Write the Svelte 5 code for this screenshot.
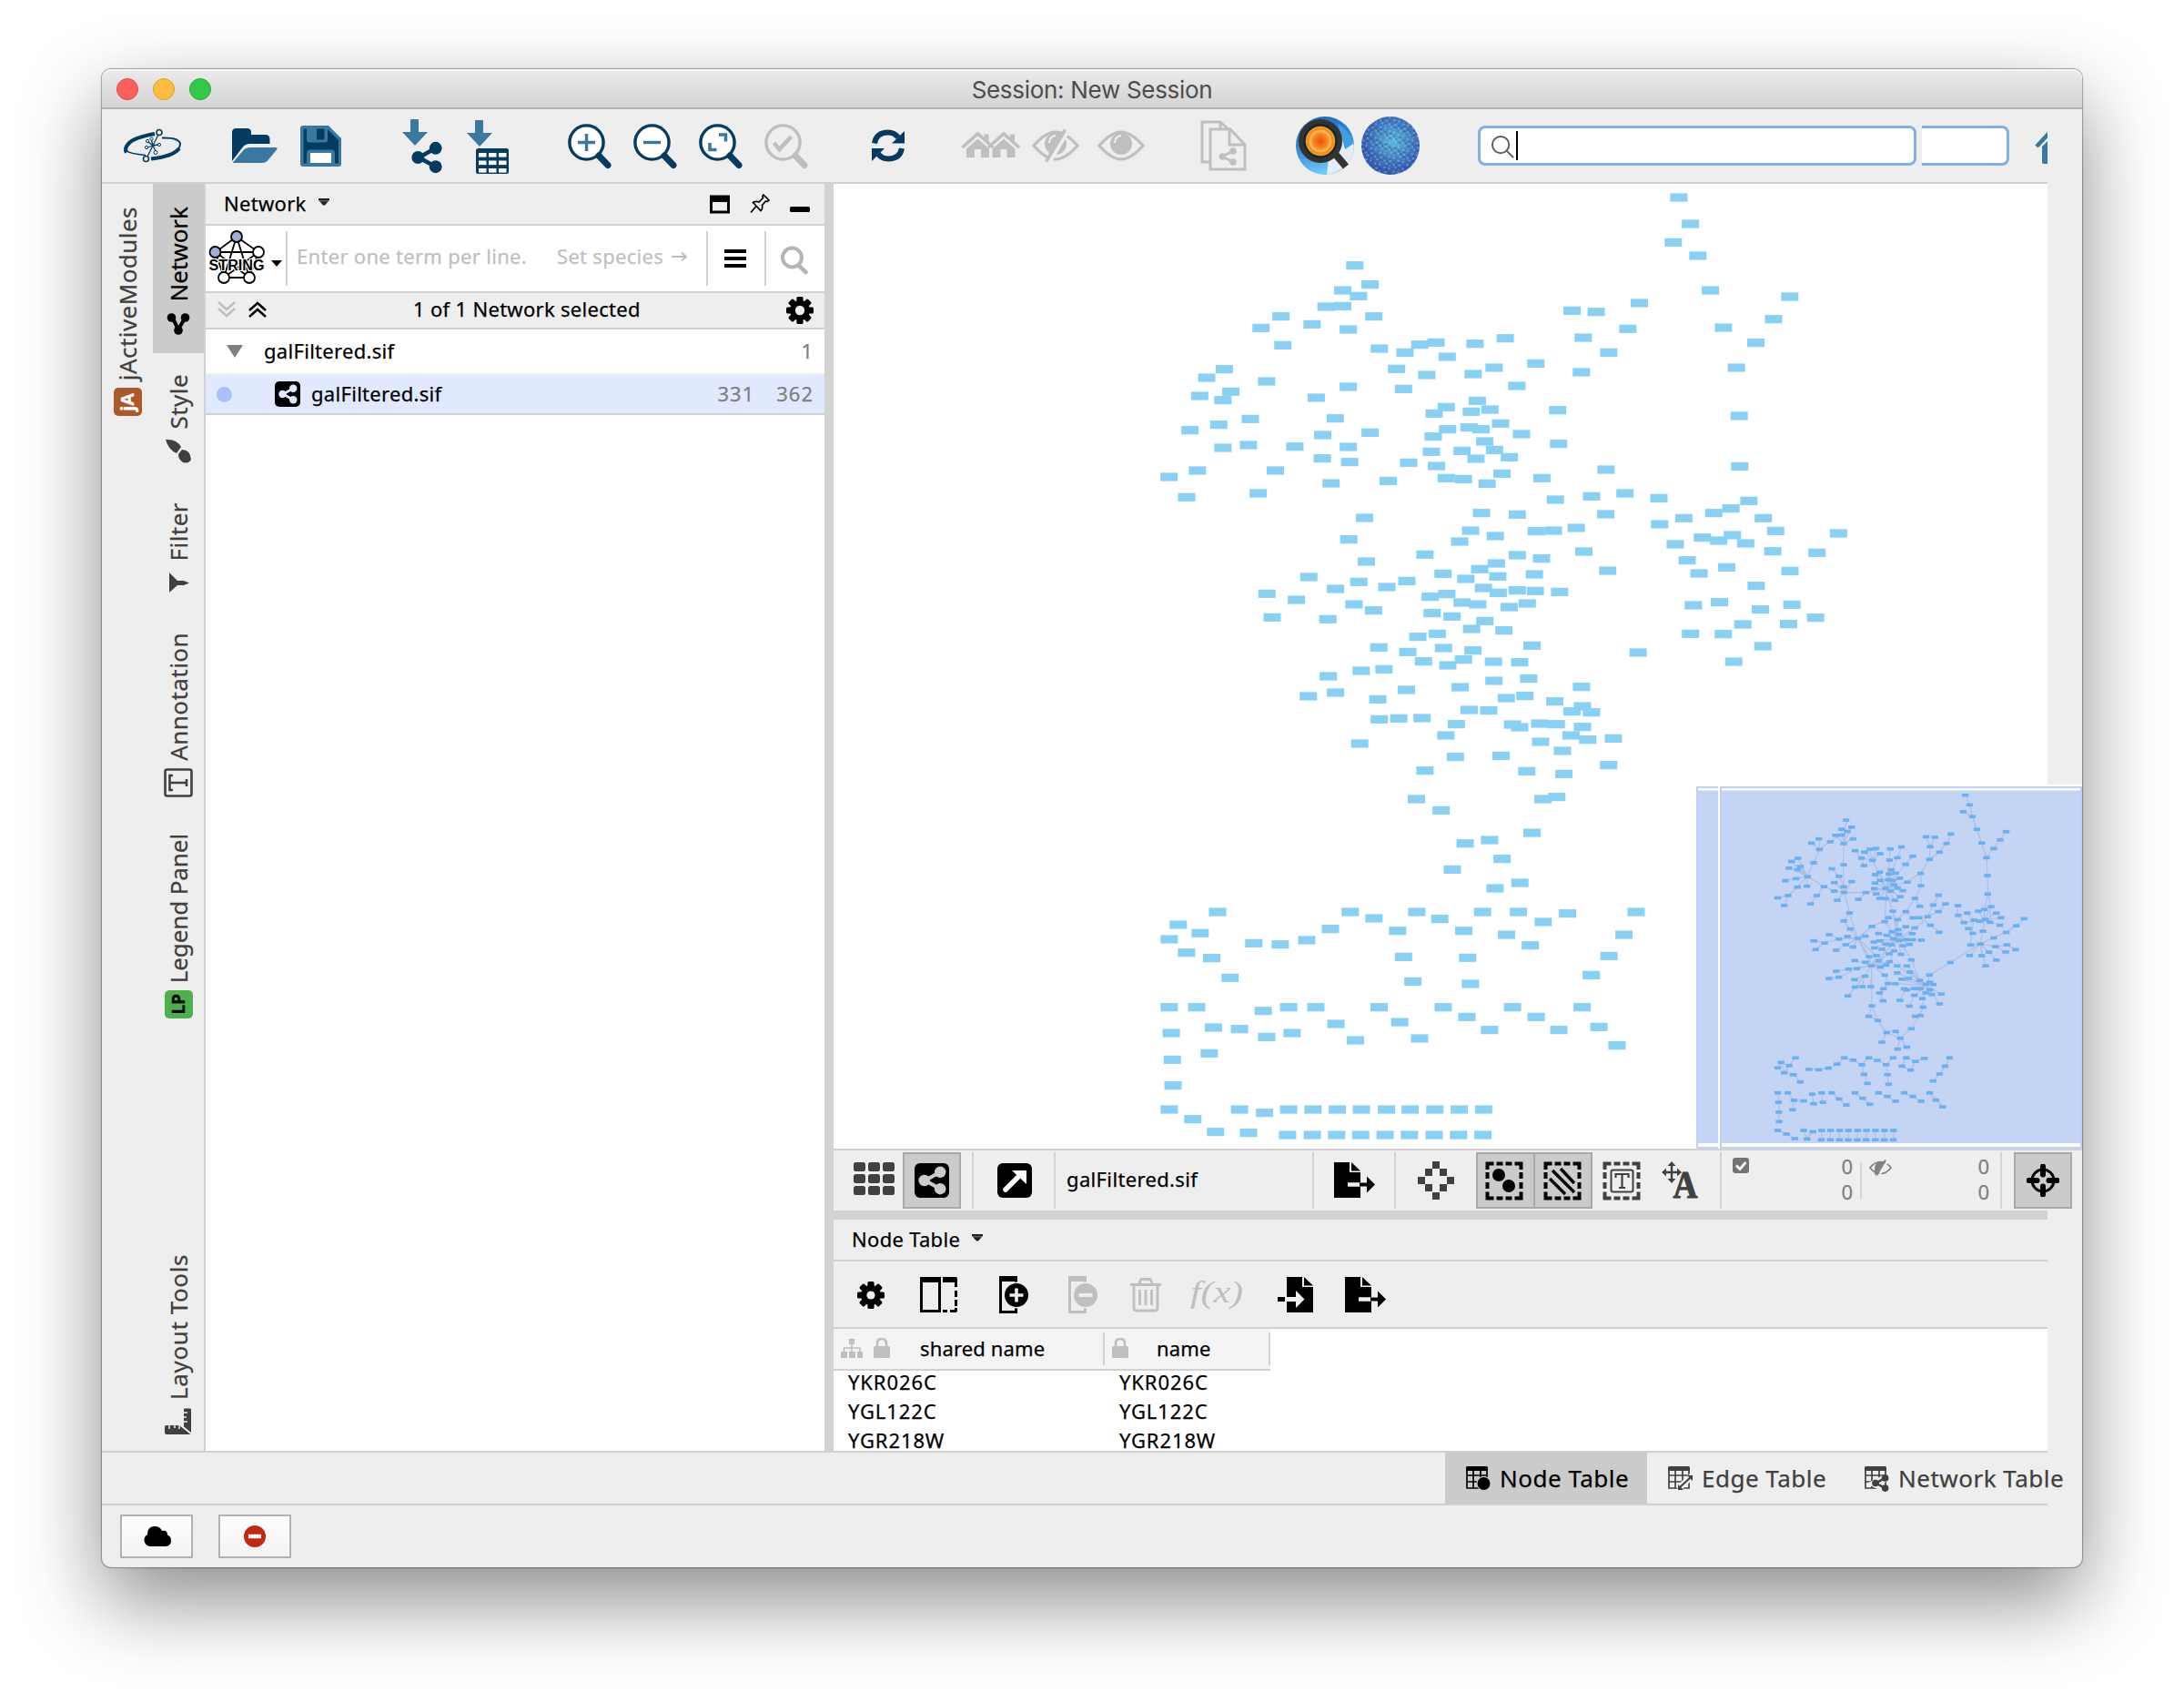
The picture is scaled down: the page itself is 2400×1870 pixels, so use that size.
<script>
  // Layout sections: each has its origin, a horizontal unit and a list of node centres.
  const sections = [
    { ox: 1250, oy: 200, ux: 1.96, pts: '1166,51 1191,138 1154,199 1207,243 1234,357 1405,378 1370,452 1262,480 1332,530 1290,612 1296,771 1297,937 1317,1051 468,275 501,338 442,357 476,376 406,411 442,409 309,443 266,481 376,469 509,443 454,486 313,538 521,549 576,562 608,536 643,529 727,533 792,515 667,576 558,616 623,636 723,633 768,612 858,598 817,672 573,682 936,424 988,428 1081,399 1056,484 960,513 1015,562 956,627 905,752 907,863 187,617 149,645 278,657 134,705 201,691 184,719 385,711 454,675 113,818 175,800 243,781 426,779 399,834 501,826 184,876 239,867 339,872 454,873 398,911 457,923 129,951 68,972 106,1039 297,951 260,1026 417,993 540,985 584,925 665,742 639,763 732,721 719,757 759,750 782,796 668,815 714,809 740,815 637,839 827,831 748,855 633,889 699,886 769,883 729,912 801,907 644,936 665,976 702,979 785,961 753,994 871,976 900,1047 978,1036 1009,948 1050,1026 1123,1042' },
    { ox: 1250, oy: 540, ux: 1.9122, pts: '477,87 444,158 481,231 723,71 798,76 984,75 700,129 752,147 677,165 838,131 874,129 922,120 604,208 938,198 798,210 849,221 754,237 719,256 642,271 690,288 757,280 834,273 988,261 360,282 465,298 566,295 524,315 416,321 272,337 334,357 283,415 400,421 455,372 496,392 727,318 758,334 798,326 836,328 887,331 650,338 615,347 682,366 715,372 819,369 781,381 619,401 661,412 730,427 702,453 770,458 630,469 589,479 507,514 568,529 643,516 705,524 829,508 601,560 652,573 685,554 748,561 803,563 470,591 518,586 401,609 416,663 359,675 565,654 505,685 678,645 749,624 822,617 933,644 775,681 814,674 877,692 935,708 697,720 738,722 913,725 954,728 508,751 549,748 598,747 670,767 648,804 788,768 803,777 845,765 880,767 935,776 911,804 946,818 1000,814 847,825 893,855 467,831 668,875 764,871 604,920 818,922 896,931 990,902 586,1014 638,1051 852,1014 881,1007 1097,108 1148,88 1211,71 1247,56 1315,88 1341,130 1130,174 1187,152 1221,162 1250,144 1278,171 1335,197 1428,202 1473,138 1155,227 1180,270 1238,250 1371,262 1300,311 1168,375 1223,365 1309,389 1375,373 1425,416 1368,437 1272,438 1162,469 1231,470 1314,510 1253,561 1052,531' },
    { ox: 1250, oy: 880, ux: 2.6133, pts: '941,140 1011,129 1133,105 1047,191 904,226 1027,288 1098,270 230,366 117,408 180,436 91,456 141,500 213,518 266,583 334,469 410,473 486,459 554,422 611,366 679,387 747,428 802,366 868,389 937,428 991,366 1094,366 1165,399 1235,371 1060,441 1128,476 1432,366 1397,441 1354,511 1303,574 764,514 791,595 948,517 956,603 91,680 170,680 97,765 100,853 102,938 218,747 206,832 293,752 361,692 371,778 434,680 444,765 512,680 570,735 626,789 694,680 753,729 810,783 878,680 946,712 1011,755 1077,680 1145,712 1210,755 1277,680 1325,745 1377,806 91,1017 159,1049 224,1091 293,1017 319,1094 365,1028 434,1017 504,1017 574,1017 643,1017 715,1017 783,1017 854,1017 924,1017 994,1017 431,1101 502,1101 572,1101 641,1101 711,1101 781,1101 852,1101 922,1101 992,1101' }
  ];
  const nodes = sections.flatMap((s) =>
    s.pts.split(' ').map((p) => {
      const [x, y] = p.split(',').map(Number);
      return { x: s.ox + x / s.ux, y: s.oy + y / 3 };
    })
  );

  const chains = [
    '930,71 944,101 952,141 967,183 983,229 999,276 1002,336 1004,396 992,447', '922,125 952,141',
    '1064,191 1044,216 1022,246 999,276', '1004,396 1013,438 1010,487',
    '881,199 868,229 844,258 811,282 782,328 784,369 763,411 733,455 704,480 705,545', '799,208 813,240 811,282', '829,209 813,240',
    '782,328 738,356 668,378', '763,411 780,437',
    '528,229 527,300 528,372 531,392 547,459 527,486 549,511 574,543', '547,459 574,543',
    '515,203 483,224 449,249 429,293 409,339', '421,229 449,249 447,214',
    '375,373 345,402 311,409', '409,339 375,373', '345,402 333,434', '409,339 463,372 497,386 531,392', '463,372 440,402 419,429',
    '489,313 513,338 528,372', '531,392 601,392 668,378', '601,392 577,413',
    '681,248 679,284', '719,241 705,276', '755,272 732,297',
    '668,411 663,486 621,504 574,543', '663,378 690,453 708,520',
    '429,551 465,558 513,545 574,543', '435,580 465,558', '503,581 537,564', '481,531 513,545',
    '764,508 793,486 804,471 823,434 841,401', '804,471 841,454 865,429', '793,486 774,474 755,474 733,455', '793,486 814,498 843,522',
    '717,560 752,613 777,681', '543,645 504,652', '480,676 513,671 571,643', '620,632 597,666 565,679', '597,666 567,703 543,733', '597,666 590,703',
    '620,632 621,765 610,799 640,813 669,854 654,885', '621,765 640,813', '669,854 714,872 699,850', '706,908 714,872 736,902',
    '714,872 750,840 778,798 790,769 788,742 802,700', '744,766 762,731', '713,747 732,712', '663,664 675,691 698,691', '658,709 675,691', '658,709 648,723 657,748',
    '620,632 663,664', '811,664 879,623 944,583 978,561', '1006,588 1031,614', '978,561 1028,570 1064,565 1095,579', '1028,570 1062,588',
    '978,561 1022,541 1064,522 1097,501 1123,478', '978,561 987,519 992,481', '925,490 904,466 904,435', '935,459 956,483', '938,510 951,526', '956,483 951,526 945,565',
    '311,969 322,952 348,962 369,937', '322,952 333,986 362,992 385,1016', '348,962 333,986',
    '414,974 446,975 477,971 507,957 531,937 560,944 587,959 610,937 639,945 669,959 690,937', '587,959 596,991 607,1020', '669,959 673,991 676,1023',
    '720,965 735,937 764,948 794,939', '720,965 749,977 764,948', '822,1014 844,990 862,965 878,937',
    '311,1053 315,1083 315,1116 315,1146', '344,1053 364,1077 360,1108', '364,1077 396,1080', '424,1057 429,1088', '456,1053 459,1084',
    '489,1053 513,1073 537,1092', '565,1053 591,1071 615,1089', '644,1053 672,1065 699,1080', '728,1053 756,1065 783,1080', '812,1053 832,1076 855,1098',
    '311,1176 340,1188 367,1203', '396,1176 407,1203 426,1181',
    ...[455, 484, 513, 543, 573, 603, 633, 663, 693].map((x) => `${x},1176 ${x},1207`)
  ];
  const hubs = {
    '528,229': '537,153 554,175 520,183 498,203 560,214',
    '409,339': '355,289 377,279 348,310 385,307 375,315 336,352 371,345 407,371',
    '531,392': '528,372 497,357 554,355 507,417',
    '668,378': '647,325 631,331 684,315 677,330 698,327 712,345 690,351 671,351 650,351 630,360 628,380 635,397 647,411 668,411 697,417 714,405 723,385 704,374 732,297 705,276 679,284 623,286',
    '623,286': '587,278 597,257 613,248 635,247 648,263',
    '587,278': '567,254 595,302',
    '574,543': '541,537 599,536 537,564 560,571 612,603 620,632 635,600',
    '705,545': '690,453 706,480 735,504 764,508 752,527 730,548 785,548 747,562 723,567 697,555 687,520 669,532 643,527 648,549 628,555 630,574 652,579 683,562 692,583 717,595 663,486 645,615 681,620',
    '620,632': '565,616 599,621 612,603 635,600 645,615 648,637 669,632 681,620 677,595 543,645 571,643 618,702 705,545',
    '802,700': '777,681 811,664 822,694 849,726 843,759 818,728 811,712 770,709 762,731 732,712 740,675 718,678 747,655 705,657 705,633 735,633 698,691',
    '978,561': '945,565 944,600 984,600 996,633 1006,588',
    '992,484': '971,453 992,447 1013,438 1031,459 1047,474 1043,498 1010,488 975,486 956,483 925,490'
  };
  const edgePath =
    chains.map((c) => 'M' + c.split(' ').join('L')).join('') +
    Object.entries(hubs).map(([c, to]) => to.split(' ').map((t) => `M${c}L${t}`).join('')).join('');

  const rows = ['YKR026C', 'YGL122C', 'YGR218W'];
</script>

{#snippet glass(cx, color)}
  <circle {cx} cy="156.5" r="18.6" fill={color === '#bfbfbf' ? 'none' : '#fff'} stroke={color} stroke-width="3.4" />
  <path d="M{cx + 13.5} 171L{cx + 23.5} 181.5" stroke={color} stroke-width="7" stroke-linecap="round" />
{/snippet}

{#snippet gear(cx, cy, r)}
  <g transform="translate({cx} {cy}) scale({r / 15})">
    {#each [0, 45, 90, 135] as a}
      <rect x="-3.6" y="-15" width="7.2" height="30" rx="1.6" transform="rotate({a})" />
    {/each}
    <circle r="11" />
  </g>
{/snippet}

{#snippet doc(x, y)}
  <path d="M{x} {y}h17v11h12v28h-29z" /><path d="M{x + 19} {y}l10 9.500h-10z" />
{/snippet}

{#snippet house(x)}
  <path d="M{x} 162l17-15 17 15" fill="none" stroke="#bfbfbf" stroke-width="3.6" />
  <path d="M{x + 4.500} 163.500l12.500-11 12.500 11v9.500h-9v-9h-7v9h-9zM{x + 24} 147.500h5v9l-5-4.500z" />
{/snippet}

{#snippet eye(cx, cy)}
  <path d="M{cx - 24} {cy}Q{cx - 11} {cy - 15} {cx} {cy - 15}T{cx + 24} {cy}Q{cx + 11} {cy + 15} {cx} {cy + 15}T{cx - 24} {cy}z" fill="none" stroke="#bfbfbf" stroke-width="3.2" />
  <circle {cx} cy={cy - 2} r="12" />
  <path d="M{cx - 7} {cy - 3}q0-7 7-8" fill="none" stroke="#eee" stroke-width="2" />
{/snippet}

{#snippet share(cx, cy, s)}
  <g transform="translate({cx} {cy}) scale({s})">
    <path d="M10-10L-8 0L10 10" fill="none" stroke="currentColor" stroke-width="4.4" />
    <circle cx="-9" cy="0" r="6.800" fill="currentColor" /><circle cx="10" cy="-10" r="6.800" fill="currentColor" /><circle cx="10" cy="10" r="6.800" fill="currentColor" />
  </g>
{/snippet}

{#snippet lock(x)}
  <rect {x} y="1479" width="18" height="13" rx="1.500" /><path d="M{x + 4} 1480v-4q0-5 5-5t5 5v4" fill="none" stroke="#bfbfbf" stroke-width="2.600" />
{/snippet}

{#snippet marquee(x)}
  <path d="M{x + 1.500} 1284v-6.500h7M{x + 11.500} 1277.500h7M{x + 21.500} 1277.500h7M{x + 31.500} 1277.500h7v6.500M{x + 38.500} 1287v7M{x + 38.500} 1298v7M{x + 38.500} 1308.500v7h-7M{x + 28.500} 1315.500h-7M{x + 18.500} 1315.500h-7M{x + 8.500} 1315.500h-7v-7M{x + 1.500} 1305v-7M{x + 1.500} 1294v-7" fill="none" stroke="currentColor" stroke-width="4" />
{/snippet}

{#snippet tableGlyph(x)}
  <path d="M{x + 1} 1613h22v22h-22zM{x + 1} 1621h22M{x + 1} 1628h22M{x + 8} 1615v20M{x + 16} 1615v20" fill="none" stroke="currentColor" stroke-width="1.700" />
  <rect {x} y="1611" width="24" height="5" rx="1.500" fill="currentColor" />
{/snippet}

{#snippet caret()}
  <svg class="caret" viewBox="0 0 12 8"><path d="M0 0h12v1.800L7 7.500H5L0 1.800z" fill="#222" /><path d="M1 2.800h10" stroke="#999" stroke-width=".8" /></svg>
{/snippet}

<div class="page">
  <div class="window">
    <header class="titlebar">
      <div class="lights"><i class="red"></i><i class="yellow"></i><i class="green"></i></div>
      <span class="title">Session: New Session</span>
    </header>

    <div class="toolbar">
      <svg class="t-logo" viewBox="132 128 72 64" fill="none" stroke="#043c61">
        <path d="M139 167.500Q136 163 142 157T170 147" stroke-width="4.200" />
        <path d="M138 165Q142 169 160 170.500" stroke-width="1.700" />
        <path d="M178 151.500Q197 151 198 158Q198 170 166 174.500" stroke-width="2" />
        <path d="M197 163Q190 172 166 174.500" stroke-width="4" />
        <path d="M174 148L162 172M168 160l-1.500-6M168 160l6-1M168 160l-5-4M168 160l-6 2M168 160l3 6" stroke-width="1.300" />
        <g stroke-width="1.600" fill="#eee"><circle cx="175" cy="145.500" r="3" /><circle cx="160.500" cy="174.500" r="3" /></g>
        <g stroke-width="1"><circle cx="166.500" cy="152.500" r="1.600" /><circle cx="175" cy="159" r="1.600" /><circle cx="162" cy="155" r="1.600" /><circle cx="161" cy="162" r="1.600" /><circle cx="171" cy="167.500" r="2" /></g>
      </svg>
      <svg class="t-open" viewBox="250 128 58 64">
        <path d="M255 177V145.500q0-4.500 4.500-4.500h12q4.500 0 4.500 4.500v2.500h15.500q5 0 5 5v5h-22q-5 0-8 4z" fill="#043c61" />
        <path d="M256 178.500l11-13q3-3.500 7.500-3.500h28.500q2.500 0 1 2.500l-9.500 11.500q-2.500 3-6.500 3h-31q-1 0-1-.5z" fill="#3a78a0" />
      </svg>
      <svg class="t-save" viewBox="328 128 50 64">
        <path d="M333 138h28l14 14v28q0 3-3 3h-39q-3 0-3-3v-39q0-3 3-3z" fill="#3a78a0" />
        <path d="M333.500 141.500h3.500v12q0 3 3 3h17q3 0 3-3v-11.500l12 12v25.500h-4v-11q0-4-4-4h-23q-4 0-4 4v11h-3.500z" fill="#043c61" />
        <rect x="348" y="141.500" width="8.500" height="12" rx="1" fill="#043c61" /><rect x="341" y="168" width="23" height="11" fill="#fff" />
      </svg>
      <svg class="t-impnet" viewBox="440 128 48 64">
        <path d="M451 132q0-1 1-1h7q1 0 1 1v13h10l-14 15-14-15h9z" fill="#3a78a0" />
        <g color="#043c61">{@render share(468.5, 173, 1.02)}</g>
      </svg>
      <svg class="t-imptab" viewBox="510 128 52 64">
        <path d="M522 133q0-1 1-1h7q1 0 1 1v13h10l-14 15-14-15h9z" fill="#3a78a0" />
        <rect x="523" y="163" width="36" height="28" rx="2.500" fill="#043c61" />
        {#each [168, 176.500, 185] as y}{#each [526, 537, 548] as x}<rect {x} {y} width="8.500" height="4.600" fill="#fff" />{/each}{/each}
      </svg>
      <svg class="t-zoom first" viewBox="622 128 52 64">{@render glass(644.5, '#043c61')}<path d="M635 156.500h19M644.500 147v19" stroke="#3a78a0" stroke-width="3.400" /></svg>
      <svg class="t-zoom" viewBox="622 128 52 64">{@render glass(644.5, '#043c61')}<path d="M635 156.500h19" stroke="#3a78a0" stroke-width="3.400" /></svg>
      <svg class="t-zoom" viewBox="622 128 52 64">{@render glass(644.5, '#043c61')}<path d="M646 148h7.500v7.500M643.500 164.500h-7.500v-7.500" fill="none" stroke="#3a78a0" stroke-width="3.600" /></svg>
      <svg class="t-zoom" viewBox="622 128 52 64">{@render glass(644.5, '#bfbfbf')}<path d="M634.500 157l6 7 13-14" fill="none" stroke="#bfbfbf" stroke-width="4.500" /></svg>
      <svg class="t-refresh" viewBox="956 128 40 64" fill="none" stroke="#043c61" stroke-width="6">
        <path d="M961 157.500Q963 145.500 976 145.500Q983 145.500 987 151" /><path d="M991 163Q989 174.500 976 174.500Q969 174.500 965 169" />
        <path d="M994 144v13.500h-14zM958 177v-14h14z" fill="#043c61" stroke="none" />
      </svg>
      <svg class="t-houses" viewBox="1056 128 66 64" fill="#bfbfbf">{@render house(1057.5)}{@render house(1086)}</svg>
      <svg class="t-eyeoff" viewBox="1134 128 52 64" fill="#bfbfbf">{@render eye(1160, 160)}<path d="M1153 179L1175 142" stroke="#eee" stroke-width="4" /><path d="M1149.500 177.500L1170.500 142.500" stroke="#bfbfbf" stroke-width="3.600" /></svg>
      <svg class="t-eye" viewBox="1206 128 52 64" fill="#bfbfbf">{@render eye(1232, 160)}</svg>
      <svg class="t-copy" viewBox="1318 128 52 64" fill="none" stroke="#bfbfbf" stroke-width="3">
        <path d="M1329 178h-8v-44h20l9 8M1330 186v-44h22l16 17v27zM1351 142v17h17M1341 134v8" />
        <path d="M1355 166l-12 6 12 6" /><g fill="#bfbfbf" stroke="none"><circle cx="1343.500" cy="172" r="3.800" /><circle cx="1355" cy="166" r="3.800" /><circle cx="1355" cy="178" r="3.800" /></g>
      </svg>
      <svg class="t-app1" viewBox="0 0 64 64">
        <defs>
          <radialGradient id="sun"><stop offset="0" stop-color="#e8501c" /><stop offset=".4" stop-color="#f98d1b" /><stop offset=".55" stop-color="#fdb878" /><stop offset=".62" stop-color="#f98a10" /><stop offset="1" stop-color="#fcc010" /></radialGradient>
          <linearGradient id="sky" x1="0" y1="0" x2=".3" y2="1"><stop offset="0" stop-color="#1a65b8" /><stop offset=".5" stop-color="#2f86d4" /><stop offset="1" stop-color="#6cc8f6" /></linearGradient>
        </defs>
        <circle cx="32" cy="32" r="32" fill="url(#sky)" />
        <path d="M64 32Q63 58 34 64L36 46L50 20Q60 22 64 32z" fill="#e6edfa" /><path d="M46 8Q58 14 63 30L54 36z" fill="#3f9fe2" />
        <path d="M44 42L55 55" stroke="#33332f" stroke-width="8" /><circle cx="27" cy="27" r="21" fill="url(#sun)" stroke="#33332f" stroke-width="6" /><circle cx="27" cy="27" r="17.500" fill="none" stroke="#10263c" stroke-width="2.500" />
      </svg>
      <svg class="t-app2" viewBox="0 0 64 64">
        <defs>
          <radialGradient id="orb" cx=".55" cy=".42"><stop offset="0" stop-color="#5bb8dc" /><stop offset=".5" stop-color="#4a8ac6" /><stop offset="1" stop-color="#3a5cae" /></radialGradient>
          <pattern id="speck" width="11" height="13" patternUnits="userSpaceOnUse" patternTransform="rotate(24)">
            <path d="M1 2h2M6 1h2M4 6h2M9 8h2M1 10h2M6 11h1" stroke="#8fd0ea" stroke-width="1.800" /><path d="M3 4h2M8 5h2M5 9h2M0 7h2" stroke="#27479a" stroke-width="1.800" />
          </pattern>
        </defs>
        <circle cx="32" cy="32" r="32" fill="url(#orb)" /><circle cx="32" cy="32" r="32" fill="url(#speck)" opacity=".5" />
      </svg>
      <div class="search">
        <svg viewBox="0 0 28 28" fill="none" stroke="#5a5a5a" stroke-width="2"><circle cx="11.500" cy="11.500" r="9.500" /><path d="M18 18l8 8" /></svg><i class="cursor"></i>
      </div>
      <div class="search2"></div>
      <svg class="t-home" viewBox="2236 128 14 64"><path d="M2238 161l13-14" stroke="#3a78a0" stroke-width="4.500" /><path d="M2244 161l8-8v27h-6q-2 0-2-2z" fill="#3a78a0" /></svg>
    </div>

    <div class="main">
      <div class="strip outer">
        <div class="tab jactive"><span>jActiveModules</span><b class="badge orange"><em>jA</em></b></div>
      </div>
      <div class="strip inner">
        <div class="tab network"><span>Network</span>
          <svg viewBox="0 0 32 32"><path d="M9 8L16 22L24 8" fill="none" stroke="#000" stroke-width="4" /><circle cx="8.500" cy="9" r="4.800" /><circle cx="23.500" cy="9" r="4.800" /><circle cx="16" cy="23" r="4.800" /></svg>
        </div>
        <div class="tab style"><span>Style</span>
          <svg viewBox="0 0 32 32" fill="#404040"><path d="M2 3Q14 2 19 11L14 18Q5 14 2 3z" /><path d="M20 14Q29 14 30 25Q27 30 21 28Q16 25 16 19z" /></svg>
        </div>
        <div class="tab filter"><span>Filter</span>
          <svg viewBox="0 0 32 32" fill="#404040"><path d="M6 5v22l9-8h7l6-2.500-6-2.500h-7z" /></svg>
        </div>
        <div class="tab annotation"><span>Annotation</span>
          <svg viewBox="0 0 32 32" fill="none" stroke="#404040" stroke-width="2.600"><rect x="1.500" y="1.500" width="29" height="29" rx="2" /><path d="M10 8H6.500v16H10M7 16h18M25 12v8" /></svg>
        </div>
        <div class="tab legend"><span>Legend Panel</span><b class="badge lime"><em>LP</em></b></div>
        <div class="tab layout"><span>Layout Tools</span>
          <svg viewBox="0 0 32 32"><path d="M1 22q0-2 2-2h14l13 10H3q-2 0-2-2z" fill="#404040" /><path d="M30 28V2.500q0-1-1-1h-6q-1 0-1 1v19z" fill="#404040" /><path d="M6 20v4M12 20v3M17 20v4M22 6h4M22 11h3M22 16h4M18 19.500l12 10" stroke="#eee" stroke-width="1.500" /></svg>
        </div>
      </div>

      <section class="left">
        <div class="panelhead"><span>Network</span>{@render caret()}
          <svg class="winicons" viewBox="778 204 114 40"><path d="M781.500 216h19v17h-19z" fill="none" stroke="#000" stroke-width="3" /><rect x="780" y="215" width="22" height="7" />
            <path d="M839 214l6 6-2 1.500-1.500-.5-4 4.500q1 4-1.500 6l-8.500-9q3-2 6.500-.5l4.500-4.500-.5-2zM831 226.500l-6 7" fill="none" stroke="#000" stroke-width="1.700" />
            <rect x="868" y="227" width="22" height="6" rx="1.500" /></svg>
        </div>
        <div class="query">
          <svg class="string" viewBox="228 250 64 66">
            <path d="M260 259L237 276L246 304H274L284 276ZM260 259L246 304M260 259L274 304M237 276H284L246 304M237 276L274 304" fill="none" stroke="#000" stroke-width="1.800" />
            <g stroke="#000" stroke-width="1.800"><circle cx="260" cy="259" r="6" fill="#a4abda" /><circle cx="236.500" cy="276" r="6" fill="#a4abda" /><circle cx="284" cy="276" r="6" fill="#fff" /><circle cx="246" cy="304" r="6" fill="#fff" /><circle cx="274" cy="304" r="6" fill="#fff" /></g>
            <text x="229.500" y="296" textLength="61" lengthAdjust="spacingAndGlyphs" class="stringtext">STRING</text>
          </svg>
          <svg class="drop" viewBox="0 0 12 8"><path d="M0 0h12L6 7z" /></svg>
          <i class="vr v1"></i><span class="ph term">Enter one term per line.</span><span class="ph">Set species</span><svg class="arrow" viewBox="0 0 18 12"><path d="M0 6h16M11 1.500L16 6l-5 4.500" fill="none" stroke="#bfbfbf" stroke-width="2" /></svg>
          <i class="vr v2"></i>
          <svg class="burger" viewBox="0 0 24 20"><path d="M0 2h24M0 10h24M0 18h24" stroke="#000" stroke-width="4" /></svg>
          <i class="vr v3"></i>
          <svg class="find" viewBox="0 0 32 32" fill="none" stroke="#b5b5b5"><circle cx="13.500" cy="13" r="10.500" stroke-width="4" /><path d="M21 22l7.500 7" stroke-width="4.500" stroke-linecap="round" /></svg>
        </div>
        <div class="selhead">
          <svg class="chev" viewBox="238 328 56 24" fill="none" stroke-width="2.500"><path d="M240 331l9 8 9-8M240 338l9 8 9-8" stroke="#bfbfbf" /><path d="M274 340l9-8 9 8M274 347l9-8 9 8" stroke="#000" /></svg>
          <span>1 of 1 Network selected</span>
          <svg class="g32" viewBox="0 0 32 32">{@render gear(16, 16, 15)}<circle cx="16" cy="16" r="5.200" fill="#eee" /></svg>
        </div>
        <div class="netrow"><svg class="tri" viewBox="0 0 18 14"><path d="M0 0h18L9 14z" fill="#7f7f7f" /></svg><span>galFiltered.sif</span><em class="count">1</em></div>
        <div class="netrow sel"><i class="dot"></i>
          <svg class="netico" viewBox="0 0 28 28"><rect width="28" height="28" rx="5" /><g color="#e1e9ff">{@render share(14, 14, 0.62)}</g></svg>
          <span>galFiltered.sif</span><em class="count">331</em><em class="count2">362</em></div>
      </section>

      <section class="right">
        <div class="canvas">
          <svg class="graph" viewBox="916 202 1334 1060" fill="#89d0f5">
            {#each nodes as n}<rect x={n.x - 9.500} y={n.y - 4.600} width="19" height="9.200" />{/each}
          </svg>
          <svg class="birdseye" viewBox="1864 862 424 402">
            <rect x="1864" y="862" width="424" height="402" fill="#fff" />
            <rect x="1864" y="864" width="24" height="398" fill="#c4d4f5" /><rect x="1890" y="864" width="398" height="398" fill="#c4d4f5" />
            <path d="M1864 865h24M1890 865h398M1865 864v398M1891 864v398M2287 864v398M1864 1261h24M1890 1261h398" stroke="#bfd0fa" stroke-width="2" />
            <path d="M1866 867.300h22M1892 867.300h394" stroke="#fff" stroke-width="2.600" /><path d="M1866 1258h22M1892 1258h394" stroke="#fff" stroke-width="4" />
            <g transform="translate(1850 850) scale(.33333)"><path d={edgePath} fill="none" stroke="#8e9fce" stroke-opacity=".42" stroke-width="3.400" /></g>
            <g transform="translate(1480.600 793.900) scale(.3681 .3676)" fill="#68aeef">
              {#each nodes as n}<rect x={n.x - 10} y={n.y - 5} width="20" height="10" opacity=".95" />{/each}
            </g>
          </svg>
        </div>
        <div class="viewbar">
          <svg class="b-grid" viewBox="936 1266 50 62" fill="#404040">{#each [1277, 1290, 1303] as y}{#each [938, 954, 970] as x}<rect {x} {y} width="13" height="10" rx="2.500" />{/each}{/each}</svg>
          <div class="press one"><svg viewBox="0 0 38 38"><rect width="38" height="38" rx="6" /><g color="#cbcbcb">{@render share(19, 19, 0.92)}</g></svg></div>
          <i class="sep s1"></i>
          <svg class="b-ext" viewBox="0 0 38 38"><rect width="38" height="38" rx="6" /><path d="M9 29L25 13" stroke="#fff" stroke-width="5.500" stroke-linecap="round" /><path d="M16 8h15q1 0 1 1v14z" fill="#fff" /></svg>
          <i class="sep s2"></i>
          <span class="vname">galFiltered.sif</span>
          <i class="sep s3"></i>
          <svg class="b-exp" viewBox="1466 1277 46 40">{@render doc(1466, 1277)}<path d="M1481 1301.500h15" stroke="#eee" stroke-width="4.500" /><path d="M1494 1299.500h8v-7l9 9-9 9v-7h-8z" /></svg>
          <i class="sep s4"></i>
          <svg class="b-dia" viewBox="1558 1276 40 42" fill="#404040">{#each [[0, -17], [8, -9], [-8, -9], [16, 0], [-16, 0], [8, 8], [-8, 8], [0, 17]] as [x, y]}<rect x={1574 + x} y={1293 + y} width="8" height="8" />{/each}</svg>
          <div class="press two"><svg viewBox="1634 1275 42 43">{@render marquee(1635)}<circle cx="1649" cy="1290" r="7" /><circle cx="1660" cy="1302" r="7" /></svg></div>
          <div class="press three"><svg viewBox="1634 1275 42 43">{@render marquee(1635)}<path d="M1641 1294l17 17M1644 1285l24 24M1653 1283l15 16" stroke="#000" stroke-width="3.400" /></svg></div>
          <svg class="b-ann" viewBox="1634 1275 42 43" color="#404040">{@render marquee(1635)}<rect x="1643.500" y="1284.500" width="24" height="24" rx="2" fill="none" stroke="#404040" stroke-width="2" /><path d="M1648.500 1293v-4h14v4M1655.500 1289v15M1652 1304h7" fill="none" stroke="#404040" stroke-width="2.200" /></svg>
          <svg class="b-label" viewBox="1826 1266 42 62" fill="#404040"><path d="M1837 1279v18M1828 1288h18" stroke="#404040" stroke-width="2.400" /><path d="M1837 1276l4.500 5h-9zM1837 1300l4.500-5h-9zM1826 1288l5-4.500v9zM1848 1288l-5-4.500v9z" />
            <text x="1838.500" y="1316" class="bigA" textLength="27" lengthAdjust="spacingAndGlyphs">A</text></svg>
          <i class="sep s5"></i>
          <svg class="b-check" viewBox="0 0 18 18"><rect width="18" height="17" rx="3" fill="#737373" /><path d="M4 8.500l4 4L14.500 5" fill="none" stroke="#fff" stroke-width="2.800" /></svg>
          <div class="zeros"><span>0</span><span>0</span></div>
          <i class="sep short"></i>
          <svg class="b-hid" viewBox="0 0 25 18" fill="none" stroke="#808080" stroke-width="1.700"><path d="M1 9Q6 2.500 12.500 2.500T24 9Q19 15.500 12.500 15.500T1 9z" /><path d="M7 15L15 3Q9 2 7 8z" fill="#808080" /><path d="M8 17.500L18 .5" stroke-width="2" /><path d="M11 17.500L21 .5" stroke="#eee" stroke-width="2" /></svg>
          <div class="zeros z2"><span>0</span><span>0</span></div>
          <i class="sep s6"></i>
          <div class="press four"><svg viewBox="0 0 36 36"><circle cx="18" cy="18" r="12" fill="none" stroke="#000" stroke-width="3" /><path d="M18 2.500v9M18 24.500v9M2.500 18h9M24.500 18h9" stroke="#000" stroke-width="6" stroke-linecap="round" /></svg></div>
        </div>
        <div class="divider"></div>
        <div class="panelhead tablehead"><span>Node Table</span>{@render caret()}</div>
        <div class="tabletools">
          <svg viewBox="940 1400 590 46">
            {@render gear(957, 1423, 15)}<circle cx="957" cy="1423" r="4.600" fill="#eee" />
            <path d="M1012.500 1404.500h20v36h-20z" fill="none" stroke="#000" stroke-width="3" /><rect x="1011" y="1403" width="23" height="6" rx="1.500" /><path d="M1036 1403h14q2 0 2 2v9h-3v-5h-13zM1049 1418h3v7h-3zM1049 1428h3v7h-3zM1044 1439h5v-2h3v3q0 2-2 2h-6zM1036 1439h5v3h-5z" />
            <path d="M1099.500 1403.500h17v38h-17z" fill="none" stroke="#000" stroke-width="3" /><rect x="1098" y="1402" width="20" height="6" rx="1.500" /><circle cx="1117" cy="1423" r="14.500" fill="#eee" /><circle cx="1117" cy="1423" r="13" /><path d="M1109.500 1423h15M1117 1415.500v15" stroke="#eee" stroke-width="3.600" />
            <g fill="#bfbfbf"><path d="M1175.500 1403.500h17v38h-17z" fill="none" stroke="#bfbfbf" stroke-width="3" /><rect x="1174" y="1402" width="20" height="6" rx="1.500" /><circle cx="1193" cy="1423" r="14.500" fill="#eee" /><circle cx="1193" cy="1423" r="13" /><path d="M1185.500 1423h15" stroke="#eee" stroke-width="4" /></g>
            <path d="M1242 1411.500h34M1251.500 1411l2.500-5.500h10l2.500 5.500M1246 1412v25q0 3 3 3h20q3 0 3-3v-25M1252.500 1417v17M1259 1417v17M1265.500 1417v17" fill="none" stroke="#bfbfbf" stroke-width="2.800" />
            <text x="1308" y="1431" textLength="58" lengthAdjust="spacingAndGlyphs" class="fx">f(x)</text>
            {@render doc(1414, 1403)}<path d="M1404 1425h8v5h-8z" /><path d="M1414 1427.500h14" stroke="#eee" stroke-width="5" /><path d="M1424 1418l9.500 9.500-9.500 9.500z" fill="#eee" />
            {@render doc(1478, 1403)}<path d="M1493 1427.500h15" stroke="#eee" stroke-width="4.500" /><path d="M1506 1425.500h8v-7l9 9-9 9v-7h-8z" />
          </svg>
        </div>
        <div class="table">
          <div class="thead">
            <div class="th c1"><svg viewBox="922 1470 58 24" fill="#bfbfbf"><path d="M933 1471h6v6h-6zM924 1485h7v7h-7zM933 1485h7v7h-7zM942 1485h6v7h-6z" /><path d="M936 1476v9M927.500 1486v-5h17.500v5" fill="none" stroke="#bfbfbf" stroke-width="1.600" />{@render lock(960)}</svg><span>shared name</span></div>
            <div class="th c2"><svg viewBox="1222 1470 18 24" fill="#bfbfbf">{@render lock(1222)}</svg><span>name</span></div>
          </div>
          <div class="tbody">
            {#each rows as r}<div class="tr"><span>{r}</span><span>{r}</span></div>{/each}
          </div>
        </div>
      </section>
    </div>

    <div class="tabs">
      <div class="btab on"><svg viewBox="1611 1609 28 30">{@render tableGlyph(1611)}<circle cx="1630.500" cy="1630" r="8" fill="#cbcbcb" /><circle cx="1630.500" cy="1630" r="7" /></svg><span>Node Table</span></div>
      <div class="btab edge"><svg viewBox="1611 1609 28 30">{@render tableGlyph(1611)}<path d="M1622 1636L1638 1621" stroke="#eee" stroke-width="7" /><path d="M1624 1634L1636 1623" stroke="#404040" stroke-width="2" /><path d="M1638 1621v6l-6-6zM1622 1637v-6l6 6z" fill="#404040" /></svg><span>Edge Table</span></div>
      <div class="btab net"><svg viewBox="1611 1609 28 30">{@render tableGlyph(1611)}<path d="M1634 1624l-12 6 12 6" stroke="#eee" stroke-width="8" fill="none" />{@render share(1628, 1629.5, 0.56)}</svg><span>Network Table</span></div>
    </div>

    <footer class="status">
      <button><svg viewBox="0 0 30 22"><path d="M7 22a7 7 0 0 1-3-13Q4 0 12 0q6 0 8 5 6-1.500 6 4.500 4 1.500 4 6 0 6.500-6 6.500z" /></svg></button>
      <button><svg viewBox="0 0 24 24" class="stop"><circle cx="12" cy="12" r="12" fill="#c22a0e" /><rect x="5" y="9.800" width="14" height="4.400" rx=".6" fill="#fff" /></svg></button>
    </footer>
  </div>
</div>

<style>
  :global(body) { margin: 0; background: #fff; overflow: hidden; }
  .page { width: 2400px; height: 1870px; overflow: hidden; background: #fff; font-family: 'Noto Sans', 'Open Sans', sans-serif; font-size: 22px; letter-spacing: .3px; color: #000; display: flex; align-items: flex-start; }
  svg { display: block; flex: none; }
  i, em, b { font-style: normal; display: block; flex: none; }
  .window { margin: 76px 0 0 112px; width: 2176px; height: 1646px; background: #eee; border-radius: 10px; display: flex; flex-direction: column; box-shadow: 0 0 0 1px rgba(0,0,0,.22), 0 36px 90px rgba(0,0,0,.46), 0 0 3px rgba(0,0,0,.25); -webkit-text-stroke: .25px; }
  .window div, .window section, .window header { box-sizing: border-box; }

  .titlebar { height: 44px; flex: none; border-radius: 10px 10px 0 0; background: linear-gradient(#ebebeb, #d3d3d3); border-bottom: 2px solid #b1b1b1; box-shadow: inset 0 2px 0 #f6f6f6; display: flex; align-items: center; }
  .lights { display: flex; gap: 16px; padding: 2px 0 0 16px; width: 200px; }
  .lights i { width: 24px; height: 24px; border-radius: 50%; box-sizing: border-box; }
  .red { background: #fc605c; border: 1px solid #e2463f; }
  .yellow { background: #fdbc40; border: 1px solid #dfa023; }
  .green { background: #34c84a; border: 1px solid #1dad2b; }
  .title { flex: 1; margin-right: 200px; padding-top: 3px; text-align: center; font: 26px/40px Inter, sans-serif; letter-spacing: -.3px; color: #4d4d4d; -webkit-text-stroke: 0; }

  .toolbar { height: 82px; flex: none; width: 2138px; border-bottom: 2px solid #d1d1d1; display: flex; align-items: center; overflow: hidden; }
  .toolbar > svg { height: 64px; }
  .t-logo { width: 72px; margin-left: 20px; }
  .t-open { width: 58px; margin-left: 46px; }
  .t-save { width: 50px; margin-left: 20px; }
  .t-impnet { width: 48px; margin-left: 62px; }
  .t-imptab { width: 52px; margin-left: 22px; }
  .t-zoom { width: 52px; margin-left: 20px; }
  .t-zoom.first { margin-left: 60px; }
  .t-refresh { width: 40px; margin-left: 66px; }
  .t-houses { width: 66px; margin-left: 60px; }
  .t-eyeoff { width: 52px; margin-left: 12px; }
  .t-eye { width: 52px; margin-left: 20px; }
  .t-copy { width: 52px; margin-left: 60px; }
  .t-app1 { width: 64px; margin-left: 54px; }
  .t-app2 { width: 64px; margin-left: 8px; }
  .search { flex: none; margin-left: 64px; width: 482px; height: 44px; border: 3px solid #7fb0ec; border-radius: 8px; background: #fff; display: flex; align-items: center; padding-left: 11px; }
  .search svg { width: 27px; height: 27px; margin-top: 2px; }
  .cursor { width: 2px; height: 32px; margin-left: 1px; background: #000; }
  .search2 { flex: none; margin-left: 6px; width: 96px; height: 44px; border: 3px solid #7fb0ec; border-left: 0; border-radius: 0 8px 8px 0; background: #fff; }
  .t-home { width: 14px; margin-left: 28px; }

  .main { height: 1392px; flex: none; display: flex; }
  .strip { width: 56px; flex: none; height: 1392px; display: flex; flex-direction: column; }
  .strip.inner { width: 58px; border-right: 2px solid #d1d1d1; }
  .tab { display: flex; flex-direction: column; justify-content: flex-end; align-items: center; padding-bottom: 16px; gap: 8px; flex: none; font-size: 26px; letter-spacing: .45px; color: #404040; }
  .tab span { writing-mode: vertical-rl; transform: rotate(180deg); line-height: 36px; white-space: nowrap; }
  .tab svg { width: 32px; height: 32px; }
  .jactive { height: 271px; }
  .network { height: 186px; background: #cbcbcb; color: #000; letter-spacing: 0; }
  .style { height: 140px; }
  .filter { height: 144px; }
  .annotation { height: 220px; }
  .legend { height: 243px; letter-spacing: -.1px; }
  .layout { margin-top: auto; height: 240px; letter-spacing: .6px; }
  .badge { width: 31px; height: 31px; border-radius: 5px; display: flex; align-items: center; justify-content: center; letter-spacing: 0; }
  .badge em { writing-mode: vertical-rl; transform: rotate(180deg); font-size: 20px; line-height: 24px; font-weight: 700; }
  .orange { background: #ab5a2c; color: #fff; }
  .lime { background: #4eb04a; color: #000; }
  .lime em { font-size: 19px; }

  .left { width: 680px; flex: none; background: #fff; display: flex; flex-direction: column; }
  .panelhead { height: 46px; flex: none; background: #eee; border-bottom: 2px solid #d1d1d1; display: flex; align-items: center; padding-left: 20px; }
  .panelhead span { padding-bottom: 3px; }
  .caret { width: 12px; height: 8px; margin-left: 13px; margin-top: -4px; }
  .winicons { width: 114px; height: 40px; margin-left: auto; margin-right: 14px; }
  .query { height: 74px; flex: none; border-bottom: 2px solid #d1d1d1; display: flex; align-items: center; }
  .string { width: 64px; height: 66px; margin-left: 2px; }
  .stringtext { font: bold 16px 'Liberation Sans', sans-serif; letter-spacing: 0; stroke: #fff; stroke-width: 2px; paint-order: stroke; }
  .drop { width: 12px; height: 8px; margin-left: 6px; margin-top: 12px; }
  .vr { width: 2px; height: 60px; background: #d1d1d1; }
  .v1 { margin-left: 4px; }
  .ph { color: #bfbfbf; margin-bottom: 6px; white-space: nowrap; }
  .term { margin-left: 10px; width: 286px; flex: none; }
  .arrow { width: 18px; height: 12px; margin-left: 9px; margin-top: -5px; }
  .v2 { margin-left: auto; }
  .burger { width: 24px; height: 20px; margin-left: 18px; }
  .v3 { margin-left: 20px; }
  .find { width: 32px; height: 32px; margin: 4px 17px 0 15px; }
  .selhead { height: 40px; flex: none; background: #eee; border-bottom: 2px solid #d1d1d1; display: flex; align-items: center; }
  .chev { width: 56px; height: 24px; margin-left: 12px; }
  .selhead span { flex: 1; text-align: center; padding-bottom: 4px; margin-left: -20px; margin-right: -21px; }
  .g32 { width: 32px; height: 32px; margin-right: 11px; }
  .netrow { height: 50px; flex: none; border-bottom: 2px solid #eee; display: flex; align-items: center; padding-right: 12px; }
  .netrow span { padding-bottom: 3px; }
  .netrow.sel { height: 44px; background: #e1e9ff; border-bottom: 2px solid #d1d1d1; }
  .tri { width: 18px; height: 14px; margin: 0 23px 0 23px; }
  .count { margin-left: auto; color: #808080; padding-bottom: 3px; letter-spacing: 1px; }
  .count2 { margin-left: 24px; color: #808080; padding-bottom: 3px; letter-spacing: 1px; }
  .dot { width: 17px; height: 17px; border-radius: 50%; background: #a9c0fb; margin-left: 12px; }
  .netico { width: 28px; height: 28px; margin: 0 12px 0 47px; }

  .right { width: 1382px; flex: none; border-left: 10px solid #d3d3d3; display: flex; flex-direction: column; }
  .canvas { position: relative; height: 1062px; flex: none; width: 1334px; background: #fff; border-bottom: 2px solid #d1d1d1; }
  .graph { width: 1334px; height: 1060px; }
  .birdseye { position: absolute; left: 948px; top: 660px; width: 424px; height: 402px; }
  .viewbar { height: 66px; width: 1372px; flex: none; display: flex; align-items: center; box-shadow: 0 -2px 0 #d1d1d1; position: relative; }
  .b-grid { width: 50px; height: 62px; margin-left: 20px; }
  .press { flex: none; height: 62px; border: 2px solid #a9a9a9; background: #cbcbcb; display: flex; align-items: center; justify-content: center; }
  .one { width: 64px; margin-left: 6px; }
  .one svg, .b-ext { width: 38px; height: 38px; }
  .sep { width: 2px; height: 62px; background: #d3d3d3; }
  .s1 { margin-left: 12px; }
  .b-ext { margin-left: 26px; }
  .s2 { margin-left: 24px; }
  .vname { width: 270px; flex: none; margin-left: 12px; padding-bottom: 4px; letter-spacing: .35px; }
  .b-exp { width: 46px; height: 40px; margin-left: 22px; }
  .s4 { margin-left: 20px; }
  .b-dia { width: 40px; height: 42px; margin-left: 24px; }
  .two { width: 65px; margin-left: 24px; }
  .three { width: 65px; margin-left: -2px; }
  .two svg, .three svg, .b-ann { width: 42px; height: 43px; }
  .two svg { margin-right: 3px; }
  .three svg { margin-right: 1px; }
  .b-ann { margin-left: 11px; }
  .b-label { width: 42px; height: 62px; margin-left: 23px; }
  .bigA { font: bold 42px/1 'Liberation Serif', serif; letter-spacing: 0; stroke: #404040; stroke-width: 1px; }
  .s5 { margin-left: 22px; }
  .b-check { width: 18px; height: 18px; margin: 0 0 32px 12px; }
  .zeros { width: 114px; display: flex; flex-direction: column; text-align: right; color: #808080; line-height: 27.500px; letter-spacing: 0; padding-bottom: 3px; }
  .short { height: 40px; margin-left: 8px; }
  .b-hid { width: 25px; height: 18px; margin: 0 0 29px 8px; }
  .z2 { width: 107px; }
  .s6 { margin-left: 12px; }
  .four { width: 64px; margin-left: 13px; }
  .four svg { width: 36px; height: 36px; }
  .divider { height: 10px; width: 1334px; flex: none; background: #d3d3d3; }
  .tablehead { width: 1334px; }
  .tablehead .caret, .caret { flex: none; }
  .tabletools { height: 74px; width: 1334px; flex: none; border-bottom: 2px solid #d1d1d1; display: flex; align-items: center; padding: 1px 0 0 24px; }
  .tabletools svg { width: 590px; height: 46px; }
  .fx { font: italic 34px 'Liberation Serif', serif; letter-spacing: 0; fill: #bfbfbf; }
  .table { height: 134px; width: 1334px; flex: none; background: #fff; overflow: hidden; }
  .thead { display: flex; align-items: center; height: 46px; width: 480px; background: #f4f4f4; border-bottom: 2px solid #d1d1d1; }
  .th { display: flex; align-items: center; height: 36px; border-right: 2px solid #d1d1d1; }
  .th svg { height: 24px; }
  .th span { letter-spacing: .15px; padding-bottom: 3px; }
  .c1 { width: 298px; padding-left: 6px; }
  .c1 svg { width: 58px; }
  .c2 { width: 182px; padding-left: 8px; }
  .c2 svg { width: 18px; }
  .c1 span { margin-left: 31px; }
  .c2 span { margin-left: 31px; }
  .tbody { padding-top: 2px; }
  .tr { display: flex; height: 21px; line-height: 21px; margin-bottom: 11px; padding-left: 16px; letter-spacing: .9px; }
  .tr:last-child { margin-bottom: 0; }
  .tr span { width: 298px; }

  .tabs { height: 60px; flex: none; width: 2176px; display: flex; padding: 2px 0 0 1476px; font-size: 26px; letter-spacing: .5px; color: #404040; background: linear-gradient(#d1d1d1, #d1d1d1) 0 100% / 2138px 2px no-repeat, linear-gradient(#d1d1d1, #d1d1d1) 0 0 / 2138px 2px no-repeat; }
  .btab { display: flex; align-items: center; height: 56px; flex: none; white-space: nowrap; }
  .btab svg { width: 28px; height: 30px; }
  .btab span { margin-left: 9px; }
  .on { width: 222px; padding-left: 23px; background: #cbcbcb; color: #000; }
  .edge { padding-left: 23px; width: 216px; }
  .net { padding-left: 23px; }
  .status { flex: 1; display: flex; align-items: center; gap: 28px; padding: 0 0 0 20px; }
  .status button { box-sizing: border-box; width: 80px; height: 48px; padding: 0; margin: 0; border: 2px solid #b2b2b2; background: linear-gradient(#fff, #f3f3f3); display: flex; align-items: center; justify-content: center; }
  .status svg { width: 30px; height: 22px; margin-left: 2px; }
  .status .stop { width: 24px; height: 24px; margin-left: 0; }
</style>
